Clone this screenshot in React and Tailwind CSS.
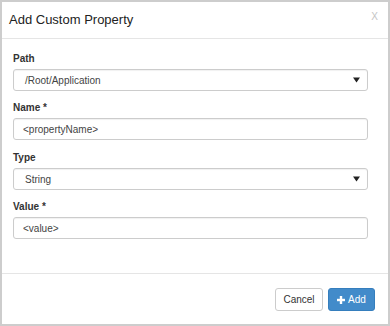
import React from 'react'

const Label = ({ children }) => (
  <div className="text-[10px] leading-[12px] font-bold text-[#333] mb-[4px]">{children}</div>
)

const SelectBox = ({ value }) => (
  <div className="h-[22px] flex items-center justify-between border border-[#ccc] rounded-[3px] bg-white pl-[11px] pr-[6px] shadow-[inset_0_1px_1px_rgba(0,0,0,0.06)]">
    <span className="text-[10px] text-[#444]">{value}</span>
    <svg width="7" height="6" viewBox="0 0 7 6" className="mr-[1px]">
      <path d="M0 0.5 H7 L3.5 5.5 Z" fill="#222" />
    </svg>
  </div>
)

const TextBox = ({ value }) => (
  <input
    readOnly
    defaultValue={value}
    className="block w-full h-[22px] border border-[#ccc] rounded-[3px] bg-white px-[9px] text-[10px] text-[#444] outline-none shadow-[inset_0_1px_1px_rgba(0,0,0,0.06)]"
    style={{ fontFamily: 'inherit' }}
  />
)

export default function App() {
  return (
    <div
      className="w-[390px] h-[326px] border-2 border-[#cdcdcd] bg-white flex flex-col"
      style={{ fontFamily: '"Liberation Sans", Arial, sans-serif' }}
    >
      <div className="h-[37px] flex items-center justify-between border-b border-[#e5e5e5] pl-[7px] pr-[10px]">
        <h2 className="text-[13px] text-[#222]">Add Custom Property</h2>
        <span className="text-[10px] text-[#c4c4c4] -mt-[8px]">X</span>
      </div>

      <div className="flex-1 pl-[11px] pr-[20px] pt-[14px]">
        <Label>Path</Label>
        <SelectBox value="/Root/Application" />

        <div className="mt-[11px]">
          <Label>Name *</Label>
          <TextBox value="<propertyName>" />
        </div>

        <div className="mt-[12px]">
          <Label>Type</Label>
          <SelectBox value="String" />
        </div>

        <div className="mt-[11px]">
          <Label>Value *</Label>
          <TextBox value="<value>" />
        </div>
      </div>

      <div className="border-t border-[#e5e5e5] pt-[14px] pb-[13px] pr-[13px] flex justify-end gap-[5px]">
        <button className="h-[23px] w-[48px] border border-[#ccc] rounded-[3px] bg-white text-[10px] text-[#333]">
          Cancel
        </button>
        <button className="h-[23px] w-[47px] border border-[#357ebd] rounded-[3px] bg-[#428bca] text-[10px] text-white flex items-center justify-center gap-[3px]">
          <svg width="8" height="8" viewBox="0 0 8 8">
            <rect x="2.8" y="0" width="2.4" height="8" fill="#fff" />
            <rect x="0" y="2.8" width="8" height="2.4" fill="#fff" />
          </svg>
          Add
        </button>
      </div>
    </div>
  )
}
